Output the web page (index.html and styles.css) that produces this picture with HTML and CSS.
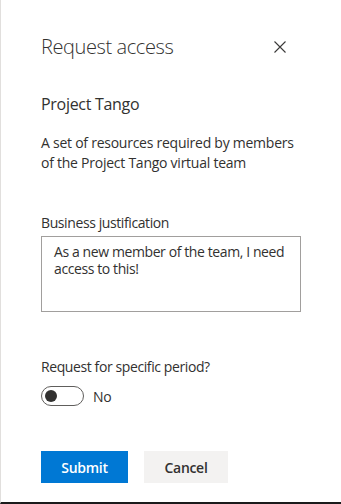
FILE: index.html
```html
<!DOCTYPE html>
<html lang="en">
<head>
<meta charset="utf-8">
<title>Request access</title>
<link rel="stylesheet" href="styles.css">
</head>
<body>
<div class="panel">
  <div class="header">
    <h1 class="title">Request access</h1>
    <button class="close" aria-label="Close">
      <svg width="12" height="12" viewBox="0 0 12 12"><path d="M0.5 0.5 L11.5 11.5 M11.5 0.5 L0.5 11.5" stroke="#3b3a39" stroke-width="1.1" fill="none"/></svg>
    </button>
  </div>
  <h2 class="name">Project Tango</h2>
  <p class="desc">A set of resources required by members of the Project Tango virtual team</p>

  <label class="label just-label" for="just">Business justification</label>
  <textarea id="just" class="textarea">As a new member of the team, I need access to this!</textarea>

  <div class="label period-label">Request for specific period?</div>
  <div class="toggle-row">
    <span class="toggle"><span class="knob"></span></span>
    <span class="toggle-text">No</span>
  </div>

  <div class="actions">
    <button class="btn primary">Submit</button>
    <button class="btn default">Cancel</button>
  </div>
</div>
</body>
</html>
```
FILE: styles.css
```css
* { box-sizing: border-box; }
html, body { margin: 0; padding: 0; background: #fff; }
body {
  font-family: "Open Sans", "Noto Sans", sans-serif;
  color: #323130;
}
.panel {
  height: 504px;
  border-left: 1px solid #e1dfdd;
  border-bottom: 2px solid #1b1b1b;
  padding: 33px 40px 0 40px;
  display: flex;
  flex-direction: column;
  align-items: flex-start;
}
.header {
  width: 260px;
  display: flex;
  justify-content: space-between;
  align-items: center;
  height: 28px;
}
.title {
  margin: 0;
  font-size: 20px;
  line-height: 28px;
  font-weight: 300;
  letter-spacing: -0.4px;
  color: #323130;
}
.close {
  border: 0;
  background: transparent;
  padding: 0;
  width: 12px;
  height: 12px;
  margin-right: 15px;
  display: flex;
}
.name {
  margin: 32px 0 0 0;
  font-size: 16px;
  line-height: 22px;
  font-weight: 400;
  letter-spacing: -0.3px;
}
.desc {
  margin: 18px 0 0 0;
  width: 255px;
  font-size: 14px;
  line-height: 20px;
  letter-spacing: -0.25px;
}
.label {
  font-size: 14px;
  line-height: 20px;
  letter-spacing: -0.4px;
}
.just-label { margin-top: 40px; }
.textarea {
  margin-top: 3px;
  width: 260px;
  height: 76px;
  border: 1px solid #a19f9d;
  padding: 6px 12px;
  font-family: inherit;
  font-size: 14px;
  line-height: 17px;
  letter-spacing: -0.4px;
  color: #323130;
  resize: none;
  overflow: hidden;
}
.period-label { margin-top: 45px; }
.toggle-row {
  margin-top: 9px;
  display: flex;
  align-items: center;
  height: 20px;
}
.toggle {
  width: 43px;
  height: 20px;
  border: 1px solid #605e5c;
  border-radius: 10px;
  display: flex;
  align-items: center;
  padding-left: 3px;
}
.knob {
  width: 12px;
  height: 12px;
  border-radius: 50%;
  background: #323130;
}
.toggle-text {
  margin-left: 9px;
  font-size: 14px;
  letter-spacing: -0.3px;
}
.actions {
  margin-top: 45px;
  display: flex;
  gap: 16px;
}
.btn {
  height: 32px;
  border: 0;
  border-radius: 0;
  font-family: inherit;
  font-size: 14px;
  font-weight: 600;
  letter-spacing: -0.3px;
  padding: 0;
}
.primary {
  width: 87px;
  background: #0078d4;
  color: #fff;
}
.default {
  width: 84px;
  background: #f3f2f1;
  color: #323130;
}
```
